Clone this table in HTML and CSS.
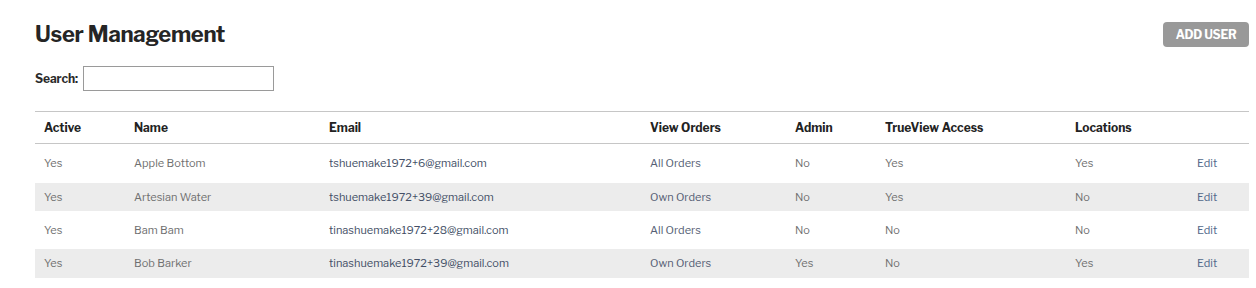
FILE: index.html
```html
<!DOCTYPE html>
<html lang="en">
<head>
<meta charset="utf-8">
<title>User Management</title>
<link rel="stylesheet" href="styles.css">
</head>
<body>
<main class="page">
  <header class="page-head">
    <h1 class="title">User Management</h1>
    <button class="btn-add" type="button">ADD USER</button>
  </header>

  <div class="search">
    <label class="search-label" for="q">Search:</label>
    <input class="search-input" id="q" type="text">
  </div>

  <table class="users">
    <colgroup>
      <col class="c-active">
      <col class="c-name">
      <col class="c-email">
      <col class="c-orders">
      <col class="c-admin">
      <col class="c-trueview">
      <col class="c-locations">
      <col class="c-edit">
    </colgroup>
    <thead>
      <tr>
        <th>Active</th>
        <th>Name</th>
        <th>Email</th>
        <th>View Orders</th>
        <th>Admin</th>
        <th>TrueView Access</th>
        <th>Locations</th>
        <th></th>
      </tr>
    </thead>
    <tbody>
      <tr>
        <td>Yes</td>
        <td>Apple Bottom</td>
        <td class="email">tshuemake1972+6@gmail.com</td>
        <td class="orders">All Orders</td>
        <td>No</td>
        <td>Yes</td>
        <td>Yes</td>
        <td><a class="edit" href="#">Edit</a></td>
      </tr>
      <tr>
        <td>Yes</td>
        <td>Artesian Water</td>
        <td class="email">tshuemake1972+39@gmail.com</td>
        <td class="orders">Own Orders</td>
        <td>No</td>
        <td>Yes</td>
        <td>No</td>
        <td><a class="edit" href="#">Edit</a></td>
      </tr>
      <tr>
        <td>Yes</td>
        <td>Bam Bam</td>
        <td class="email">tinashuemake1972+28@gmail.com</td>
        <td class="orders">All Orders</td>
        <td>No</td>
        <td>No</td>
        <td>No</td>
        <td><a class="edit" href="#">Edit</a></td>
      </tr>
      <tr>
        <td>Yes</td>
        <td>Bob Barker</td>
        <td class="email">tinashuemake1972+39@gmail.com</td>
        <td class="orders">Own Orders</td>
        <td>Yes</td>
        <td>No</td>
        <td>Yes</td>
        <td><a class="edit" href="#">Edit</a></td>
      </tr>
    </tbody>
  </table>
</main>
</body>
</html>
```

FILE: styles.css
```css
* {
  box-sizing: border-box;
}

html,
body {
  margin: 0;
  padding: 0;
  background: #ffffff;
}

body {
  font-family: "Libre Franklin", Roboto, "Liberation Sans", sans-serif;
  color: #222222;
}

.page {
  margin: 0 7px 0 35px;
}

/* Title bar */
.page-head {
  display: flex;
  align-items: center;
  justify-content: space-between;
  margin-top: 22px;
  height: 25px;
}

.title {
  margin: 0;
  font-size: 22px;
  line-height: 25px;
  font-weight: 700;
  color: #252525;
  letter-spacing: -0.3px;
}

.btn-add {
  height: 25px;
  width: 86px;
  padding: 0;
  border: 0;
  border-radius: 4px;
  background: #999999;
  color: #ffffff;
  font-family: inherit;
  font-size: 12px;
  font-weight: 700;
  letter-spacing: -0.3px;
}

/* Search */
.search {
  display: flex;
  align-items: center;
  gap: 5px;
  margin-top: 19px;
  height: 24px;
}

.search-label {
  font-size: 12px;
  font-weight: 700;
  color: #2a2a2a;
  letter-spacing: -0.1px;
}

.search-input {
  width: 191px;
  height: 25px;
  border: 1px solid #9a9a9a;
  border-radius: 0;
  padding: 0 4px;
  font-family: inherit;
}

/* Users table */
.users {
  width: 100%;
  margin-top: 21px;
  border-collapse: collapse;
  table-layout: fixed;
  border-top: 1px solid #c6c6c6;
  font-size: 12px;
}

.c-active { width: 90px; }
.c-name { width: 195px; }
.c-email { width: 321px; }
.c-orders { width: 145px; }
.c-admin { width: 90px; }
.c-trueview { width: 190px; }
.c-locations { width: 122px; }
.c-edit { width: 61px; }

.users th {
  text-align: left;
  font-weight: 700;
  color: #222222;
  line-height: 15px;
  padding: 8px 9px;
  border-bottom: 1px solid #c6c6c6;
}

.users td {
  color: #707070;
  font-size: 11px;
  line-height: 14px;
  padding: 12px 9px 13px;
  white-space: nowrap;
}

.users tbody tr:nth-child(even) td {
  background: #ececec;
  padding: 7px 9px 7px;
}

.users tbody tr:nth-child(3) td {
  padding: 12px 9px 12px;
}

.users tbody tr:nth-child(4) td {
  padding-bottom: 8px;
}

.users td.email {
  color: #434f66;
}

.users td.orders {
  color: #565f75;
}

.edit {
  color: #52698a;
  text-decoration: none;
}
```
